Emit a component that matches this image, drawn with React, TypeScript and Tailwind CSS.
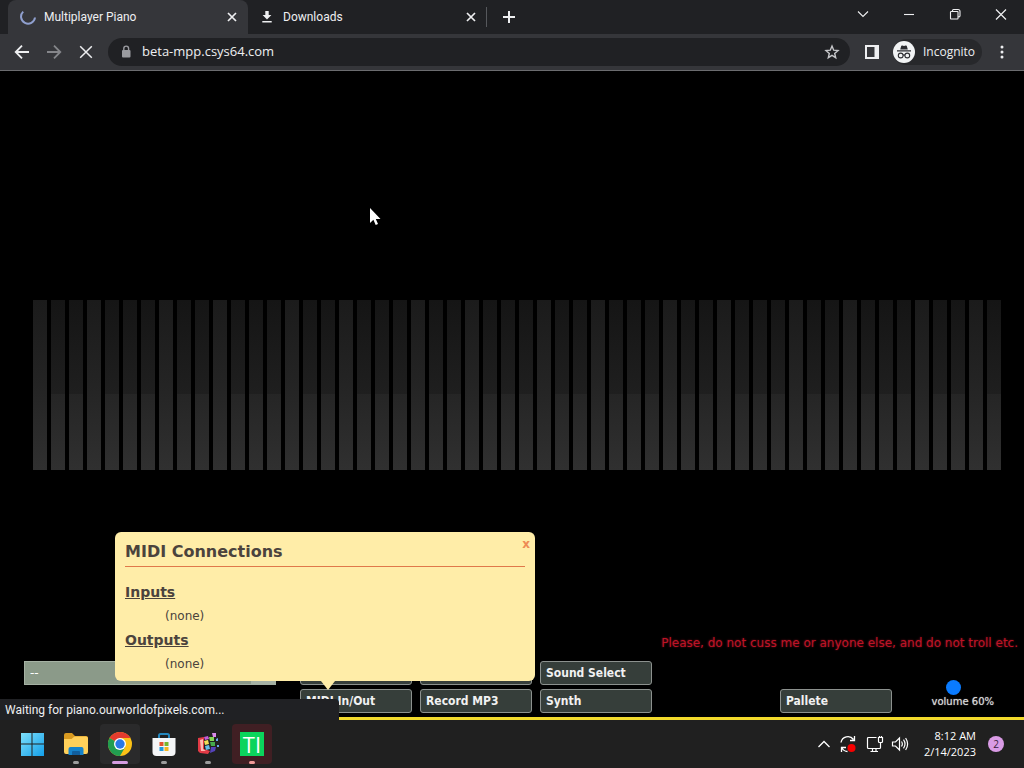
import type { ReactNode } from "react";

const UI = "font-['Open_Sans','Noto_Sans',sans-serif]";
const KEY_COUNT = 54;
const NATURALS = [0, 3];

function Stroke({ size, box = 16, width = 1, d, className = "" }: { size: number; box?: number; width?: number; d: string; className?: string }) {
  return (
    <svg width={size} height={size} viewBox={`0 0 ${box} ${box}`} fill="none" stroke="currentColor" strokeWidth={width} className={`shrink-0 ${className}`} aria-hidden="true">
      <path d={d} />
    </svg>
  );
}

function TabStrip() {
  return (
    <div className="flex h-[34px] items-stretch bg-[#202124] pl-2 text-[12px] text-[#eeeff1]">
      <div className="flex w-60 items-center rounded-t-lg bg-[#35363a] pr-2 pl-3">
        <Stroke size={16} width={2} d="M3.2 2.6 A7 7 0 1 0 15 8.5" className="text-[#8f9fce]" />
        <span className="ml-2 flex-1 truncate font-['Roboto',sans-serif]">Multiplayer Piano</span>
        <button aria-label="Close tab" className="flex size-4 items-center justify-center">
          <Stroke size={16} width={1.7} d="M4 4 L12 12 M12 4 L4 12" />
        </button>
      </div>
      <div className="flex w-[238px] items-center pr-[7px] pl-[11px]">
        <svg width="16" height="16" viewBox="0 0 16 16" fill="currentColor" className="shrink-0" aria-hidden="true">
          <path d="M6.3 2 H9.7 V6 H12.4 L8 10.5 L3.6 6 H6.3 Z M3.3 12 H12.7 V13.6 H3.3 Z" />
        </svg>
        <span className="ml-2 flex-1 truncate font-['Roboto',sans-serif]">Downloads</span>
        <button aria-label="Close tab" className="flex size-4 items-center justify-center">
          <Stroke size={16} width={1.7} d="M4 4 L12 12 M12 4 L4 12" />
        </button>
      </div>
      <div className="my-[7px] w-px bg-[#56585c]" />
      <button aria-label="New tab" className="ml-3 flex w-5 items-center justify-center">
        <Stroke size={16} width={2} d="M8 2 V14 M2 8 H14" />
      </button>
      <div className="mb-[6px] ml-auto flex">
        <button aria-label="Search tabs" className="flex w-[46px] items-center justify-center">
          <Stroke size={16} width={1.1} d="M3 5.5 L8 10.5 L13 5.5" />
        </button>
        <button aria-label="Minimize" className="flex w-[46px] items-center justify-center">
          <Stroke size={16} width={1.1} d="M3 8.5 H13" />
        </button>
        <button aria-label="Restore" className="flex w-[46px] items-center justify-center">
          <Stroke size={16} width={1.1} d="M4.5 5.5 H10.5 Q11 5.5 11 6 V12.5 Q11 13 10.5 13 H4 Q3.5 13 3.5 12.5 V6 Q3.5 5.5 4.5 5.5 M5.5 5.5 V4.5 Q5.5 3.5 6.5 3.5 H11 Q13 3.5 13 5.5 V10 Q13 11 11 11" />
        </button>
        <button aria-label="Close window" className="flex w-[46px] items-center justify-center">
          <Stroke size={16} width={1.2} d="M3 3.5 L13 13.5 M13 3.5 L3 13.5" />
        </button>
      </div>
    </div>
  );
}

function Toolbar() {
  return (
    <div className="flex h-[37px] items-center border-b border-[#6b6c6f] bg-[#35363a] text-[#eeeff1]">
      <div className="flex w-[108px] shrink-0 items-center gap-4 pl-[14px]">
        <button aria-label="Back"><Stroke size={16} width={1.8} d="M15 8 H2 M8 1.7 L1.7 8 L8 14.3" /></button>
        <button aria-label="Forward" className="text-[#85868a]"><Stroke size={16} width={1.8} d="M1 8 H14 M8 1.7 L14.3 8 L8 14.3" /></button>
        <button aria-label="Stop"><Stroke size={16} width={1.5} d="M2.2 2.2 L13.8 13.8 M13.8 2.2 L2.2 13.8" /></button>
      </div>
      <div className="flex h-7 flex-1 items-center rounded-full bg-[#202124] pr-[10px] pl-3">
        <svg width="12" height="14" viewBox="0 0 12 14" className="shrink-0 text-[#9a9ba0]" aria-hidden="true">
          <rect x="2" y="5" width="8.5" height="7.5" rx="1" fill="currentColor" />
          <path d="M3.8 5.5 V3.5 A2.4 2.4 0 0 1 8.6 3.5 V5.5" fill="none" stroke="currentColor" strokeWidth="1.4" />
        </svg>
        <input aria-label="Address" defaultValue="beta-mpp.csys64.com" className="ml-[10px] min-w-0 flex-1 bg-transparent text-[13px] outline-none" />
        <button aria-label="Bookmark this tab">
          <Stroke size={16} width={1.4} d="M8 2 L9.7 6.2 L14 6.6 L10.7 9.4 L11.7 13.7 L8 11.4 L4.3 13.7 L5.3 9.4 L2 6.6 L6.3 6.2 Z" className="text-[#c6c7ca]" />
        </button>
      </div>
      <button aria-label="Side panel" className="ml-[14px]">
        <Stroke size={16} width={2} d="M2 2 H14 V14 H2 Z M11.5 2 V14 M13 2 V14" />
      </button>
      <button className="ml-[13px] flex h-[26px] w-[89px] items-center rounded-full bg-[#27282b] text-[12px]">
        <svg width="22" height="22" viewBox="0 0 22 22" className="shrink-0" aria-hidden="true">
          <circle cx="11" cy="11" r="11" fill="#f1f3f4" />
          <path d="M7.2 8.5 L8.2 5 Q8.5 4.2 9.3 4.5 L11 5 L12.7 4.5 Q13.5 4.2 13.8 5 L14.8 8.5 Z M4 9.3 H18 V10.5 H4 Z" fill="#2b2c30" />
          <g fill="none" stroke="#2b2c30" strokeWidth="1.1">
            <circle cx="7.7" cy="14.5" r="2.4" /><circle cx="14.3" cy="14.5" r="2.4" /><path d="M10 14.2 Q11 13.5 12 14.2" />
          </g>
        </svg>
        <span className="ml-2">Incognito</span>
      </button>
      <button aria-label="Menu" className="mr-[14px] ml-3">
        <svg width="16" height="16" viewBox="0 0 16 16" fill="currentColor" aria-hidden="true">
          <circle cx="8" cy="3" r="1.5" /><circle cx="8" cy="8" r="1.5" /><circle cx="8" cy="13" r="1.5" />
        </svg>
      </button>
    </div>
  );
}

function Piano() {
  return (
    <div className="mt-[229px] mr-[23px] ml-[33px] flex h-[170px] gap-1">
      {Array.from({ length: KEY_COUNT }, (_, i) => (
        <div key={i} className="flex-1 bg-linear-to-b from-[#1b1b1b] via-[#242424] to-[#303030]">
          {!NATURALS.includes(i % 7) && <div className="h-[94px] bg-linear-to-b from-[#151515] to-[#1f1f1f]" />}
        </div>
      ))}
    </div>
  );
}

function PageButton({ children, className = "" }: { children?: ReactNode; className?: string }) {
  return (
    <button className={`h-6 rounded-[3px] border border-[#8c918e] bg-[#363e3a] px-[5px] text-left text-[12px] font-bold whitespace-nowrap text-[#f1f1f1] font-['DejaVu_Sans_Condensed','DejaVu_Sans',sans-serif] ${className}`}>
      {children}
    </button>
  );
}

function MidiDialog() {
  return (
    <section aria-labelledby="midi-title" className="absolute bottom-9 left-[115px] h-[149px] w-[420px] rounded-md bg-[#ffeda8] px-[10px] text-[#4b433d]">
      <h1 id="midi-title" className="h-[35px] border-b border-[#e0784a] pt-2 text-[16px] leading-6 font-bold">MIDI Connections</h1>
      <button aria-label="Close" className="absolute top-1 right-[5px] text-[12px] leading-4 font-bold text-[#ee8a55]">x</button>
      <h2 className="mt-[13px] text-[14px] leading-6 font-bold underline">Inputs</h2>
      <p className="pl-10 text-[12px] leading-6">(none)</p>
      <h2 className="text-[14px] leading-6 font-bold underline">Outputs</h2>
      <p className="pl-10 text-[12px] leading-6">(none)</p>
      <svg width="14" height="10" viewBox="0 0 14 10" className="absolute top-full left-[206px]" aria-hidden="true">
        <path d="M0 0 H14 L7 9 Z" fill="#ffeda8" />
      </svg>
    </section>
  );
}

function Page() {
  return (
    <main className="relative flex flex-1 flex-col border-b-[3px] border-[#f2da2c] bg-black font-['DejaVu_Sans',sans-serif]">
      <Piano />
      <p className="mt-auto mb-2 pr-[6px] text-right text-[12px] leading-5 text-[#bd1426] text-shadow-[0_0_2px_#8a1020]">Please, do not cuss me or anyone else, and do not troll etc.</p>
      <div className="flex pb-1 pl-6">
        <button className="flex h-6 w-[252px] shrink-0 items-stretch border border-[#a5b1a3] bg-[#8b9a89] text-left text-[12px] text-white">
          <span className="flex-1 pl-[5px] leading-[22px]">--</span>
          <span className="w-6 bg-[#a6b2a4]" />
        </button>
        <div className="ml-6 grid grid-cols-[repeat(5,112px)] gap-x-2 gap-y-1">
          <PageButton />
          <PageButton />
          <PageButton>Sound Select</PageButton>
          <PageButton className="col-start-1 row-start-2">MIDI In/Out</PageButton>
          <PageButton className="row-start-2">Record MP3</PageButton>
          <PageButton className="row-start-2">Synth</PageButton>
          <PageButton className="col-start-5 row-start-2">Pallete</PageButton>
        </div>
        <div className="mr-[30px] ml-auto flex flex-col pt-[19px]">
          <input id="volume" type="range" defaultValue={60} className="h-[15px] w-16 appearance-none self-start bg-transparent [&::-webkit-slider-thumb]:size-[15px] [&::-webkit-slider-thumb]:appearance-none [&::-webkit-slider-thumb]:rounded-full [&::-webkit-slider-thumb]:bg-[#0a7bff]" />
          <label htmlFor="volume" className="pl-[15px] text-[10px] leading-[14px] whitespace-nowrap text-[#d8d8d8] text-shadow-[0_0_1px_#aaaaaa]">volume 60%</label>
        </div>
      </div>
      <MidiDialog />
      <div className="absolute -bottom-[3px] left-0 flex h-[21px] w-[339px] items-center rounded-tr bg-[#202124] pl-[5px] font-['Roboto',sans-serif] text-[12px] text-[#eeeff1]">
        Waiting for piano.ourworldofpixels.com...
      </div>
      <svg width="13" height="20" viewBox="0 0 13 20" className="absolute top-[136px] left-[369px]" aria-hidden="true">
        <path d="M1 1 V16 L4.4 12.7 L6.7 18 L9 17 L6.8 12 H11.5 Z" fill="#fff" />
      </svg>
    </main>
  );
}

function TaskIcon({ label, mark = "", tile = "", children }: { label: string; mark?: string; tile?: string; children: ReactNode }) {
  return (
    <button aria-label={label} className={`flex h-10 w-10 flex-col items-center justify-between rounded pt-2 ${tile}`}>
      {children}
      <span className={`h-[3px] rounded-full ${mark}`} />
    </button>
  );
}

function Taskbar() {
  return (
    <footer className="flex h-12 items-center bg-[#202020] pr-5 pl-3 text-white">
      <div className="flex gap-1">
        <TaskIcon label="Start">
          <svg width="24" height="24" viewBox="0 0 24 24">
            <defs><linearGradient id="win" x1="0" y1="0" x2="1" y2="1"><stop stopColor="#7ee0fb" /><stop offset="1" stopColor="#139fe9" /></linearGradient></defs>
            <path d="M1 1 H11.5 V11.5 H1 Z M12.5 1 H24 V11.5 H12.5 Z M1 12.5 H11.5 V24 H1 Z M12.5 12.5 H24 V24 H12.5 Z" fill="url(#win)" />
          </svg>
        </TaskIcon>
        <TaskIcon label="File Explorer" mark="w-[6px] bg-[#9c9c9c]">
          <svg width="26" height="24" viewBox="0 0 26 24">
            <path d="M1 3 Q1 1 3 1 H9 L12 4 H23 Q25 4 25 6 V10 H1 Z" fill="#d99a20" />
            <path d="M1 7 H8.5 L11.5 4.5 H23 Q25 4.5 25 6.5 V20 Q25 22 23 22 H3 Q1 22 1 20 Z" fill="#ffd05a" />
            <path d="M5.5 23 V17 Q5.5 15 7.5 15 H18.5 Q20.5 15 20.5 17 V23 Z" fill="#1683cb" />
            <path d="M9 23 V20 Q9 19 10 19 H16 Q17 19 17 20 V23 Z" fill="#115e9d" />
          </svg>
        </TaskIcon>
        <TaskIcon label="Chrome" tile="bg-[#2a2a2b]" mark="w-4 bg-[#d59ce0]">
          <svg width="24" height="24" viewBox="0 0 24 24">
            <circle cx="12" cy="12" r="12" fill="#fbc116" />
            <path d="M12 12 L1.6 6 A12 12 0 0 1 22.4 6 H12 Z" fill="#e33b2e" />
            <path d="M12 12 L1.6 6 A12 12 0 0 0 12 24 L17.2 15 Z" fill="#219d50" />
            <circle cx="12" cy="12" r="6" fill="#fff" />
            <circle cx="12" cy="12" r="4.7" fill="#2878e5" />
          </svg>
        </TaskIcon>
        <TaskIcon label="Store" mark="w-[6px] bg-[#9c9c9c]">
          <svg width="24" height="24" viewBox="0 0 24 24">
            <path d="M7 7 V3.5 Q7 2 8.5 2 H15.5 Q17 2 17 3.5 V7" fill="none" stroke="#2587bd" strokeWidth="2" />
            <path d="M0.5 6 H23.5 V20 Q23.5 24 19.5 24 H4.5 Q0.5 24 0.5 20 Z" fill="#f5f6f7" />
            <path d="M7.5 10 H11.5 V14 H7.5 Z" fill="#e3532d" /><path d="M12.5 10 H16.5 V14 H12.5 Z" fill="#78b62c" />
            <path d="M7.5 15 H11.5 V19 H7.5 Z" fill="#2099dc" /><path d="M12.5 15 H16.5 V19 H12.5 Z" fill="#f4b620" />
          </svg>
        </TaskIcon>
        <TaskIcon label="Color cubes" mark="w-[6px] bg-[#9c9c9c]">
          <svg width="24" height="24" viewBox="0 0 24 24">
            <path d="M2 6 L8 5 L8 17 L14 19 L12 22 L4 21 L2 19 Z" fill="#e23a45" />
            <path d="M4 8 L7 7 V17 L10 19 L5 19 Z" fill="#ffb8b0" />
            <path d="M8 5 L12 4 L13 7 L9 8 Z" fill="#c45bd8" />
            <path d="M13 5 L18 5 L18 9 L14 9 Z" fill="#82d952" />
            <path d="M8 9 L12 8 L13 12 L9 13 Z" fill="#f2de58" />
            <path d="M14 10 L19 10 L19 14 L15 14 Z" fill="#45a94c" />
            <path d="M9 14 L13 13 L14 17 L10 18 Z" fill="#65bce8" />
            <path d="M15 15 L20 15 L19 19 L14 21 Z" fill="#5543ba" />
            <path d="M16 1 L20 1 L20 5 L17 5 Z" fill="#d98bea" />
            <path d="M20 7 L22 6 V9 L20 9 Z M21 13 L23 13 V15 H21 Z" fill="#6aa6ed" />
          </svg>
        </TaskIcon>
        <TaskIcon label="TI" tile="bg-[#401f23]" mark="w-[6px] bg-[#f09a98]">
          <span className="flex size-6 items-center justify-center bg-[#0bd45c] text-[22px] leading-6">TI</span>
        </TaskIcon>
      </div>
      <div className="ml-auto flex items-center">
        <Stroke size={16} width={1.3} d="M2.5 11 L8 5.5 L13.5 11" />
        <svg width="18" height="18" viewBox="0 0 18 18" fill="none" stroke="currentColor" strokeWidth="1.3" className="ml-[7px]" aria-hidden="true">
          <path d="M2 7.5 A7 7 0 0 1 14.5 4.5 M15.5 1 V5.5 H11 M2.5 17 V12.5 H7 M3 13 Q5 16.5 8.5 16.5" />
          <circle cx="12.5" cy="13" r="4" fill="#f60000" stroke="none" />
        </svg>
        <svg width="18" height="18" viewBox="0 0 18 18" fill="none" stroke="currentColor" strokeWidth="1.2" className="ml-[9px]" aria-hidden="true">
          <path d="M10.5 2.5 H2.5 Q1.5 2.5 1.5 3.5 V12.5 Q1.5 13.5 2.5 13.5 H13.5 Q14.5 13.5 14.5 12.5 V8.5 M4.5 16.5 H12 M6.5 13.5 V16.5 M10 13.5 V16.5 M12.5 2.5 V6.5 Q12.5 7.5 13.5 7.5 H15.5 Q16.5 7.5 16.5 6.5 V2.5 Z M14.5 7.5 V9 M13.5 1 V2.5 M15.5 1 V2.5" />
        </svg>
        <svg width="18" height="18" viewBox="0 0 18 18" fill="none" stroke="currentColor" strokeWidth="1.2" className="ml-[7px]" aria-hidden="true">
          <path d="M1.5 7 H4.5 L8.5 3 V15 L4.5 11 H1.5 Z M10.5 6.5 Q12.2 9 10.5 11.5 M12.5 4.7 Q15.5 9 12.5 13.3 M14.6 3 Q18.6 9 14.6 15" />
        </svg>
        <time className="ml-[15px] text-right text-[11px] leading-4">8:12 AM<br />2/14/2023</time>
        <span className="ml-3 flex size-4 items-center justify-center rounded-full bg-[#d99be5] text-[10px] leading-4 text-[#38213d]">2</span>
      </div>
    </footer>
  );
}

export default function App() {
  return (
    <div className={`flex min-h-screen flex-col overflow-hidden bg-black ${UI}`}>
      <header>
        <TabStrip />
        <Toolbar />
      </header>
      <Page />
      <Taskbar />
    </div>
  );
}
